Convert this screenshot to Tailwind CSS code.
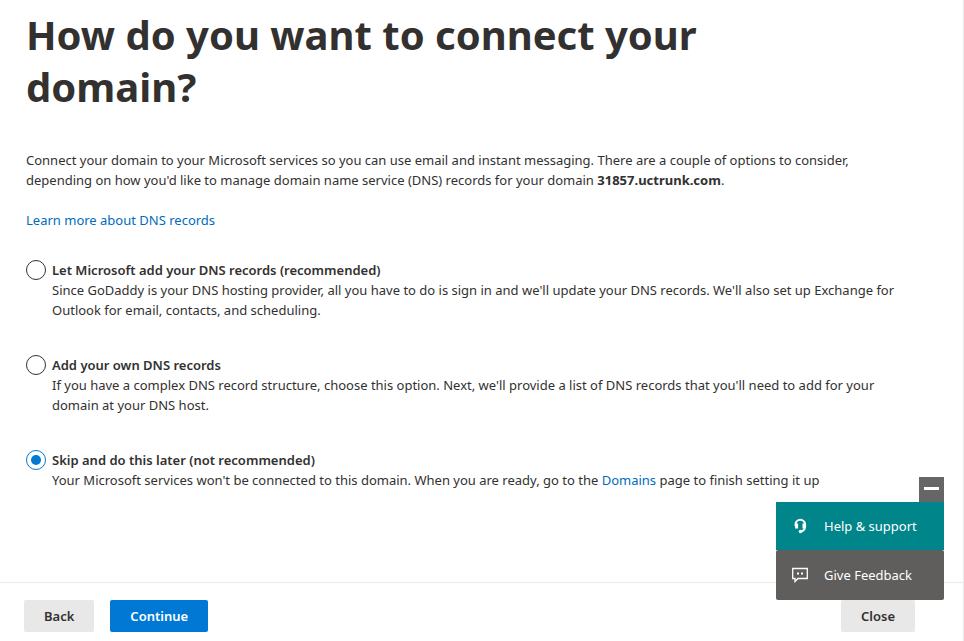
<!DOCTYPE html>
<html lang="en">
<head>
  <meta charset="UTF-8">
  <meta name="viewport" content="width=device-width, initial-scale=1.0">
  <title>Connect your domain</title>
  <script src="https://cdn.jsdelivr.net/npm/@tailwindcss/browser@4"></script>
</head>
<body class="bg-white text-[#323130] font-['Noto_Sans','Open_Sans',sans-serif] text-[13px] leading-5">

  <div class="relative flex flex-col h-screen overflow-hidden border-r border-[#eaeaea]">
    <main class="flex-1 pl-[26px] pr-12 pt-[9px]">
      <h1 class="max-w-[720px] text-[40px] leading-[52px] font-bold">How do you want to connect your domain?</h1>

      <p class="mt-[37px]">Connect your domain to your Microsoft services so you can use email and instant messaging. There are a couple of options to consider, depending on how you'd like to manage domain name service (DNS) records for your domain <strong>31857.uctrunk.com</strong>.</p>
      <p class="mt-5"><a href="#" class="text-[#006cbe]">Learn more about DNS records</a></p>

      <div class="mt-[30px] flex flex-col gap-[35px]">
        <div class="flex gap-[6px]">
          <input id="auto" type="radio" name="dns" class="appearance-none shrink-0 size-5 rounded-full border border-[#323130]">
          <div>
            <label for="auto" class="block font-semibold">Let Microsoft add your DNS records (recommended)</label>
            <p>Since GoDaddy is your DNS hosting provider, all you have to do is sign in and we'll update your DNS records. We'll also set up Exchange for Outlook for email, contacts, and scheduling.</p>
          </div>
        </div>
        <div class="flex gap-[6px]">
          <input id="own" type="radio" name="dns" class="appearance-none shrink-0 size-5 rounded-full border border-[#323130]">
          <div>
            <label for="own" class="block font-semibold">Add your own DNS records</label>
            <p>If you have a complex DNS record structure, choose this option. Next, we'll provide a list of DNS records that you'll need to add for your domain at your DNS host.</p>
          </div>
        </div>
        <div class="flex gap-[6px]">
          <input id="skip" type="radio" name="dns" checked class="appearance-none shrink-0 size-5 rounded-full border border-[#0078d4] p-1 bg-[#0078d4] bg-clip-content">
          <div>
            <label for="skip" class="block font-semibold">Skip and do this later (not recommended)</label>
            <p>Your Microsoft services won't be connected to this domain. When you are ready, go to the <a href="#" class="text-[#006cbe]">Domains</a> page to finish setting it up</p>
          </div>
        </div>
      </div>
    </main>

    <footer class="flex items-center gap-4 border-t border-[#eaeaea] pl-6 pr-12 pt-[17px] pb-[9px] font-semibold">
      <button class="h-8 px-5 rounded-xs bg-[#e8e8e8]">Back</button>
      <button class="h-8 px-5 rounded-xs bg-[#0078d4] text-white">Continue</button>
      <button class="h-8 px-5 rounded-xs bg-[#e8e8e8] ml-auto">Close</button>
    </footer>

    <aside class="absolute right-[19px] bottom-[41px] w-[168px] flex flex-col items-end text-white">
      <button aria-label="Minimize" class="w-[25px] h-[25px] flex justify-center pt-[10px] bg-[#666666]">
        <span class="w-[15px] h-[3px] bg-white"></span>
      </button>
      <button class="w-full h-12 flex items-center gap-4 pl-4 bg-[#00858a]">
        <svg class="size-4" viewBox="0 0 16 16" fill="none" stroke="currentColor">
          <path d="M3.5 8V6.5a4.8 4.8 0 0 1 9.6 0V9c0 2-1 3-3 4.500" stroke-width="2"/>
          <path d="M4.600 5.500v5M12 5.500v5" stroke-width="3"/>
          <circle cx="8.5" cy="13.5" r="1.800" fill="currentColor" stroke="none"/>
        </svg>
        Help &amp; support
      </button>
      <button class="w-full h-[50px] flex items-center gap-4 pl-4 rounded-xs bg-[#605e5c]">
        <svg class="size-4" viewBox="0 0 16 16" fill="none" stroke="currentColor">
          <path d="M.7 1.500h14.600v10H6l-3 3v-3H.7z" stroke-width="1.300"/>
          <path d="M5 6.500h2M9 6.500h2" stroke-width="2"/>
        </svg>
        Give Feedback
      </button>
    </aside>
  </div>

</body>
</html>
